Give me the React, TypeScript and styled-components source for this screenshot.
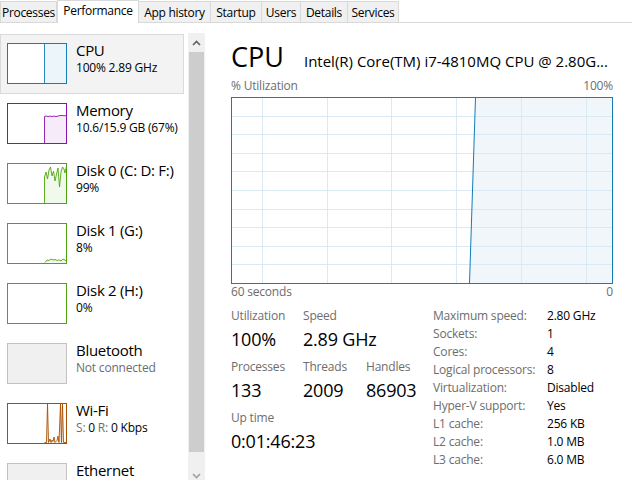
import React from "react";
import styled, { createGlobalStyle } from "styled-components";

const GlobalStyle = createGlobalStyle`
  html, body {
    margin: 0;
    padding: 0;
    background: #fff;
    overflow: hidden;
  }
  body {
    font-family: "Open Sans", "Noto Sans", sans-serif;
    color: #000;
  }
`;

const Dim = styled.span`
  color: #6d6d6d;
`;

const CPU_BLUE = "#117dbb";

const tabs = ["Processes", "Performance", "App history", "Startup", "Users", "Details", "Services"];
const tabWidths = [57, 82, 72, 51, 39, 47, 51];

type Res = {
  title: string;
  sub: React.ReactNode;
  color: string;
  fill: string;
  line?: string;
  area?: string;
  selected?: boolean;
};

const resources: Res[] = [
  {
    title: "CPU",
    sub: "100% 2.89 GHz",
    color: CPU_BLUE,
    fill: "#fff",
    line: "37.5,40 37.5,0.5",
    area: "37.5,40 37.5,0.5 59.5,0.5 59.5,40",
    selected: true,
  },
  {
    title: "Memory",
    sub: "10.6/15.9 GB (67%)",
    color: "#8b12ae",
    fill: "#fff",
    line: "37.5,40 37.5,13.5 39,13 41,13.6 43,13 45,13.5 47,13 49,13.6 51,13 53,12.6 55,12.4 57,12.8 59.5,12.5",
    area: "37.5,40 37.5,13.5 59.5,12.5 59.5,40",
  },
  {
    title: "Disk 0 (C: D: F:)",
    sub: "99%",
    color: "#4da60c",
    fill: "#fff",
    line: "37.5,40 37.5,14 39,9 40.5,16 42,7 43.5,4 45,13 46.5,8 48,18 49.5,11 51,5 52.5,24 54,9 55.5,4 57,6 58,10 59.5,3",
    area: "37.5,40 37.5,14 39,9 40.5,16 42,7 43.5,4 45,13 46.5,8 48,18 49.5,11 51,5 52.5,24 54,9 55.5,4 57,6 58,10 59.5,3 59.5,40",
  },
  {
    title: "Disk 1 (G:)",
    sub: "8%",
    color: "#4da60c",
    fill: "#fff",
    line: "38,39.5 40,37 42,37.5 44,36 46,37 48,36.5 50,37.5 52,36.8 54,38 56,36 58,37 59.5,38",
    area: "38,39.5 40,37 42,37.5 44,36 46,37 48,36.5 50,37.5 52,36.8 54,38 56,36 58,37 59.5,38 59.5,40",
  },
  { title: "Disk 2 (H:)", sub: "0%", color: "#4da60c", fill: "#fff" },
  {
    title: "Bluetooth",
    sub: <Dim>Not connected</Dim>,
    color: "#c2c2c2",
    fill: "#f0f0f0",
  },
  {
    title: "Wi-Fi",
    sub: (
      <>
        <Dim>S:</Dim> 0 <Dim>R:</Dim> 0 Kbps
      </>
    ),
    color: "#a74f01",
    fill: "#fff",
    line: "37.5,39.5 39.5,39.5 40.5,1 41.5,39.5 43,36 44,39.5 45,37 46,38.5 47,34 48,39.5 50,37.5 51,33 52,39.5 53.5,1 54.5,39.5 55.5,1 56.5,39.5 59.5,39.5",
    area: "37.5,39.5 39.5,39.5 40.5,1 41.5,39.5 43,36 44,39.5 45,37 46,38.5 47,34 48,39.5 50,37.5 51,33 52,39.5 53.5,1 54.5,39.5 55.5,1 56.5,39.5",
  },
  { title: "Ethernet", sub: "", color: "#c2c2c2", fill: "#f0f0f0" },
];

const specs: [string, string][] = [
  ["Maximum speed:", "2.80 GHz"],
  ["Sockets:", "1"],
  ["Cores:", "4"],
  ["Logical processors:", "8"],
  ["Virtualization:", "Disabled"],
  ["Hyper-V support:", "Yes"],
  ["L1 cache:", "256 KB"],
  ["L2 cache:", "1.0 MB"],
  ["L3 cache:", "6.0 MB"],
];

function Thumb({ r }: { r: Res }) {
  return (
    <ThumbBox width="60" height="41" viewBox="0 0 60 41">
      <rect x="0.5" y="0.5" width="59" height="40" fill={r.fill} stroke="none" />
      {r.area && <polygon points={r.area} fill={r.color} fillOpacity={0.08} />}
      {r.line && <polyline points={r.line} fill="none" stroke={r.color} strokeWidth="0.9" />}
      <rect x="0.5" y="0.5" width="59" height="40" fill="none" stroke={r.color} strokeWidth="1" />
    </ThumbBox>
  );
}

function UsageGraph() {
  const w = 382;
  const h = 187;
  const verticals = [31, 96, 160, 225, 290, 355];
  const rows = Array.from({ length: 9 }, (_, i) => Math.round(((i + 1) * (h - 1)) / 10) + 0.5);
  return (
    <GraphSvg width={w} height={h} viewBox={`0 0 ${w} ${h}`}>
      <polygon points={`244.5,0.5 ${w - 0.5},0.5 ${w - 0.5},${h - 0.5} 238.5,${h - 0.5}`} fill="#f1f6fa" />
      {verticals.map((x) => (
        <line key={x} x1={x + 0.5} y1="0" x2={x + 0.5} y2={h} stroke="#d9eaf4" />
      ))}
      {rows.map((y) => (
        <line key={y} x1="0" y1={y} x2={w} y2={y} stroke="#d9eaf4" />
      ))}
      <line x1="244.5" y1="0.5" x2="238.5" y2={h - 0.5} stroke={CPU_BLUE} />
      <rect x="0.5" y="0.5" width={w - 1} height={h - 1} fill="none" stroke={CPU_BLUE} />
    </GraphSvg>
  );
}

export default function App() {
  return (
    <Window>
      <GlobalStyle />
      <TabBar>
        {tabs.map((t, i) => (
          <Tab key={t} $active={t === "Performance"} $w={tabWidths[i]} $first={i === 0}>
            {t}
          </Tab>
        ))}
      </TabBar>
      <Body>
        <Sidebar>
          <List>
            {resources.map((r) => (
              <Item key={r.title} $selected={!!r.selected}>
                <Thumb r={r} />
                <ItemText>
                  <ItemTitle>{r.title}</ItemTitle>
                  <ItemSub>{r.sub}</ItemSub>
                </ItemText>
              </Item>
            ))}
          </List>
          <Scrollbar>
            <ScrollArrow>
              <svg width="9" height="6" viewBox="0 0 9 6">
                <polyline points="1,5 4.5,1.5 8,5" fill="none" stroke="#606060" strokeWidth="1.6" />
              </svg>
            </ScrollArrow>
            <ScrollThumb />
            <ScrollTrack />
            <ScrollArrow>
              <svg width="9" height="6" viewBox="0 0 9 6">
                <polyline points="1,1 4.5,4.5 8,1" fill="none" stroke="#a0a0a0" strokeWidth="1.6" />
              </svg>
            </ScrollArrow>
          </Scrollbar>
        </Sidebar>
        <Main>
          <Header>
            <HeaderTitle>CPU</HeaderTitle>
            <HeaderModel>Intel(R) Core(TM) i7-4810MQ CPU @ 2.80G...</HeaderModel>
          </Header>
          <AxisRow $top={5}>
            <span>% Utilization</span>
            <span>100%</span>
          </AxisRow>
          <UsageGraph />
          <AxisRow $top={0}>
            <span>60 seconds</span>
            <span>0</span>
          </AxisRow>
          <Stats>
            <StatGrid>
              <StatCell>
                <StatLabel>Utilization</StatLabel>
                <StatValue>100%</StatValue>
              </StatCell>
              <StatCell $span={2}>
                <StatLabel>Speed</StatLabel>
                <StatValue>2.89 GHz</StatValue>
              </StatCell>
              <StatCell>
                <StatLabel>Processes</StatLabel>
                <StatValue>133</StatValue>
              </StatCell>
              <StatCell>
                <StatLabel>Threads</StatLabel>
                <StatValue>2009</StatValue>
              </StatCell>
              <StatCell>
                <StatLabel>Handles</StatLabel>
                <StatValue>86903</StatValue>
              </StatCell>
              <StatCell $span={3}>
                <StatLabel>Up time</StatLabel>
                <StatValue>0:01:46:23</StatValue>
              </StatCell>
            </StatGrid>
            <SpecTable>
              {specs.map(([k, v]) => (
                <React.Fragment key={k}>
                  <SpecKey>{k}</SpecKey>
                  <SpecVal>{v}</SpecVal>
                </React.Fragment>
              ))}
            </SpecTable>
          </Stats>
        </Main>
      </Body>
    </Window>
  );
}

const Window = styled.div`
  width: 632px;
  height: 480px;
  display: flex;
  flex-direction: column;
  overflow: hidden;
`;

const TabBar = styled.div`
  display: flex;
  align-items: flex-end;
  height: 23px;
  box-sizing: border-box;
  border-bottom: 1px solid #d9d9d9;
  flex-shrink: 0;
`;

const Tab = styled.div<{ $active: boolean; $w: number; $first: boolean }>`
  box-sizing: border-box;
  width: ${(p) => p.$w}px;
  height: ${(p) => (p.$active ? 23 : 21)}px;
  margin-bottom: ${(p) => (p.$active ? -1 : 0)}px;
  padding-bottom: ${(p) => (p.$active ? 4 : 0)}px;
  display: flex;
  align-items: center;
  justify-content: center;
  font-size: 12px;
  letter-spacing: -0.3px;
  color: #000;
  background: ${(p) => (p.$active ? "#fff" : "#f0f0f0")};
  border: 1px solid #d9d9d9;
  border-bottom: ${(p) => (p.$active ? "none" : "0")};
  border-left: ${(p) => (p.$first || p.$active ? "1px solid #d9d9d9" : "none")};
  white-space: nowrap;
`;

const Body = styled.div`
  flex: 1;
  display: flex;
  min-height: 0;
`;

const Sidebar = styled.div`
  width: 205px;
  flex-shrink: 0;
  display: flex;
  gap: 4px;
`;

const List = styled.div`
  width: 184px;
  padding-top: 11px;
  display: flex;
  flex-direction: column;
`;

const Item = styled.div<{ $selected: boolean }>`
  box-sizing: border-box;
  height: 60px;
  flex-shrink: 0;
  display: flex;
  align-items: flex-start;
  border: 1px solid ${(p) => (p.$selected ? "#dadada" : "transparent")};
  background: ${(p) => (p.$selected ? "#f3f3f3" : "transparent")};
`;

const ThumbBox = styled.svg`
  display: block;
  flex-shrink: 0;
  margin: 8px 9px 0 6px;
`;

const ItemText = styled.div`
  padding-top: 6px;
  display: flex;
  flex-direction: column;
  white-space: nowrap;
`;

const ItemTitle = styled.div`
  font-size: 15px;
  line-height: 19px;
  letter-spacing: -0.3px;
`;

const ItemSub = styled.div`
  font-size: 12px;
  line-height: 15px;
  letter-spacing: -0.2px;
`;

const Scrollbar = styled.div`
  width: 17px;
  margin-top: 10px;
  flex-shrink: 0;
  display: flex;
  flex-direction: column;
  background: #f0f0f0;
`;

const ScrollArrow = styled.div`
  height: 19px;
  flex-shrink: 0;
  display: flex;
  align-items: center;
  justify-content: center;
`;

const ScrollThumb = styled.div`
  height: 400px;
  flex-shrink: 0;
  margin: 0 1px;
  background: #cdcdcd;
`;

const ScrollTrack = styled.div`
  height: 14px;
  flex-shrink: 0;
`;

const Main = styled.div`
  flex: 1;
  min-width: 0;
  padding: 0 19px 0 26px;
  display: flex;
  flex-direction: column;
`;

const Header = styled.div`
  margin-top: 18px;
  display: flex;
  align-items: baseline;
  white-space: nowrap;
`;

const HeaderTitle = styled.div`
  font-size: 27px;
  line-height: 32px;
  flex-shrink: 0;
`;

const HeaderModel = styled.div`
  margin-left: 20px;
  font-size: 15px;
  letter-spacing: 0;
`;

const AxisRow = styled.div<{ $top: number }>`
  margin-top: ${(p) => p.$top}px;
  margin-bottom: ${(p) => (p.$top ? 3 : 0)}px;
  display: flex;
  justify-content: space-between;
  font-size: 12px;
  line-height: 16px;
  color: #6d6d6d;
  letter-spacing: -0.2px;
`;

const GraphSvg = styled.svg`
  display: block;
  flex-shrink: 0;
`;

const Stats = styled.div`
  margin-top: 8px;
  display: flex;
`;

const StatGrid = styled.div`
  width: 202px;
  flex-shrink: 0;
  display: grid;
  grid-template-columns: 72px 63px 1fr;
  row-gap: 9px;
  align-content: start;
`;

const StatCell = styled.div<{ $span?: number }>`
  grid-column: span ${(p) => p.$span ?? 1};
  display: flex;
  flex-direction: column;
  white-space: nowrap;
`;

const StatLabel = styled.div`
  font-size: 12px;
  line-height: 16px;
  color: #6d6d6d;
  letter-spacing: -0.2px;
`;

const StatValue = styled.div`
  margin-top: 4px;
  font-size: 18px;
  line-height: 22px;
  letter-spacing: -0.2px;
`;

const SpecTable = styled.div`
  margin-top: -1px;
  display: grid;
  grid-template-columns: 114px auto;
  grid-auto-rows: 18px;
  font-size: 12px;
  line-height: 18px;
  letter-spacing: -0.2px;
  white-space: nowrap;
`;

const SpecKey = styled.div`
  color: #6d6d6d;
`;

const SpecVal = styled.div`
  color: #000;
`;
